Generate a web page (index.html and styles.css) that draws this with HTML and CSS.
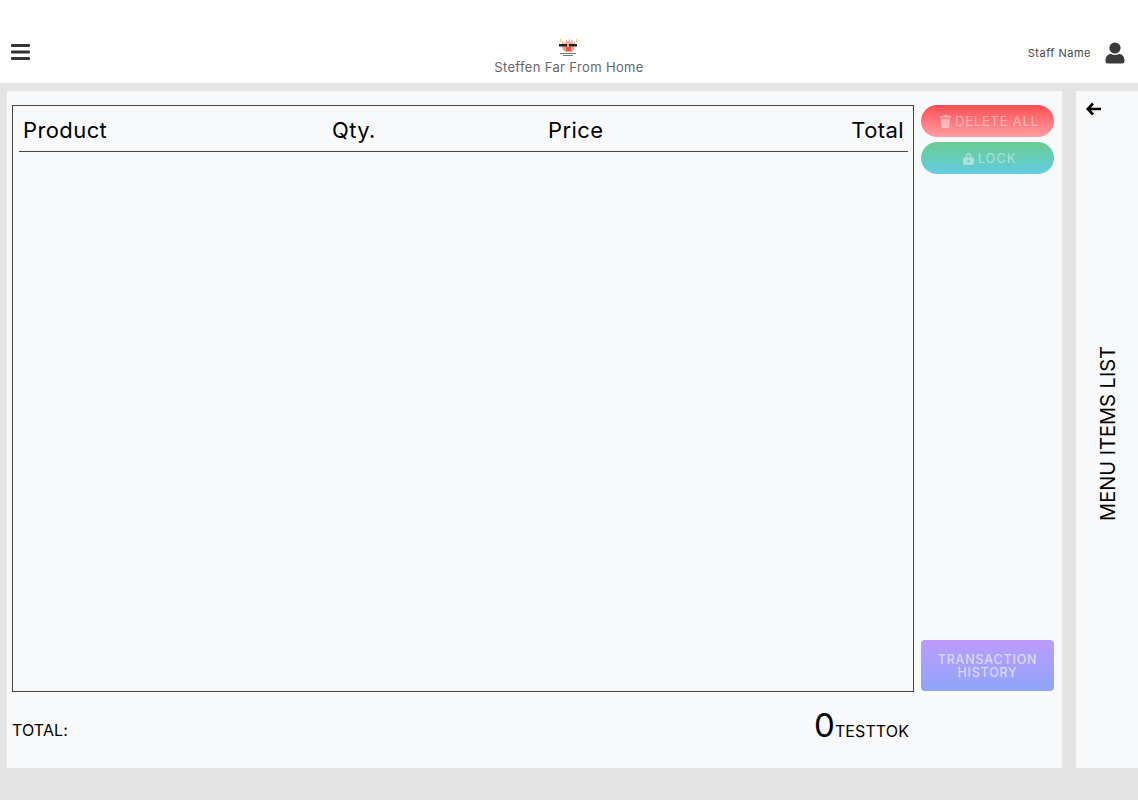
FILE: index.html
```html
<!DOCTYPE html>
<html lang="en">
<head>
  <meta charset="UTF-8" />
  <meta name="viewport" content="width=device-width, initial-scale=1.0"/>
  <title>Steffen Far From Home</title>
  <link rel="stylesheet" href="styles.css">
</head>
<body>

  <header class="topbar">
    <svg class="menu-icon" viewBox="0 0 20 18" aria-hidden="true">
      <rect x="0" y="1" width="19" height="3" rx="1"/>
      <rect x="0" y="7.5" width="19" height="3" rx="1"/>
      <rect x="0" y="14" width="19" height="3" rx="1"/>
    </svg>

    <div class="brand">
      <svg class="logo" viewBox="0 0 20 20" aria-hidden="true">
        <path fill="#f0a290" d="M3 4l3 3 1.500-5L9 6l1-5 1.500 5L13 2l1 5 2-3-.5 8-2.500 3H6l-2.500-3z"/>
        <path fill="#f3c65e" d="M1 2h1v3H1zM17 2h1v3h-1z"/>
        <path fill="#222" d="M0 7h8v2.500H0zM10 7h8v2.500h-8z"/>
        <path fill="#dd5a44" d="M7 10h5v4H7z"/>
        <path fill="#777" d="M1 16h16v1H1zM4 18h10v1H4z"/>
      </svg>
      <div class="brand-name">Steffen Far From Home</div>
    </div>

    <div class="staff">
      <span class="staff-name">Staff Name</span>
      <svg class="user-icon" viewBox="0 0 20 22" aria-hidden="true">
        <circle cx="10" cy="6" r="5.6"/>
        <path d="M0.5 19c0-4.500 2.500-7 5.500-7 1.200.6 2.600 1 4 1s2.800-.4 4-1c3 0 5.500 2.500 5.500 7 0 1.400-1 2.400-2.400 2.400H2.900C1.500 21.400.5 20.400.5 19z"/>
      </svg>
    </div>
  </header>

  <div class="content">
    <main class="order-panel">
      <div class="order-top">
        <section class="order-table">
          <div class="order-head">
            <span class="col">Product</span>
            <span class="col">Qty.</span>
            <span class="col">Price</span>
            <span class="col col-total">Total</span>
          </div>
        </section>

        <aside class="actions">
          <button class="btn btn-delete">
            <svg class="btn-icon" viewBox="0 0 12 14" aria-hidden="true">
              <path d="M4 0h4l.5 1H12v2H0V1h3.500zM1 4h10l-.7 9.200c0 .5-.4.800-.9.800H2.600c-.5 0-.9-.3-.9-.8z"/>
            </svg>
            DELETE ALL
          </button>
          <button class="btn btn-lock">
            <svg class="btn-icon" viewBox="0 0 12 14" aria-hidden="true">
              <path fill-rule="evenodd" d="M3 6V4a3 3 0 0 1 6 0v2h1.500c.8 0 1.500.7 1.500 1.500v5c0 .8-.7 1.500-1.500 1.500h-9C.7 14 0 13.300 0 12.500v-5C0 6.700.7 6 1.500 6zm1.500 0h3V4a1.500 1.500 0 0 0-3 0zM6 8.500a1.300 1.300 0 1 0 0 2.600 1.300 1.300 0 0 0 0-2.600z"/>
            </svg>
            LOCK
          </button>
          <button class="btn btn-history">TRANSACTION<br>HISTORY</button>
        </aside>
      </div>

      <div class="order-total">
        <span class="total-label">TOTAL:</span>
        <span class="total-value"><span class="total-num">0</span>TESTTOK</span>
      </div>
    </main>

    <aside class="menu-panel">
      <svg class="back-icon" viewBox="0 0 16 14" aria-hidden="true">
        <path d="M7 1.500L1.800 7 7 12.500M2 7h13" fill="none" stroke="#000" stroke-width="2.600"/>
      </svg>
      <div class="menu-title">MENU ITEMS LIST</div>
    </aside>
  </div>

</body>
</html>
```

FILE: styles.css
```css
* {
  margin: 0; padding: 0; box-sizing: border-box;
}
body {
  font-family: 'Inter', 'Liberation Sans', sans-serif;
  background: #e4e4e4;
  color: #000;
  height: 800px;
  overflow: hidden;
}
.topbar {
  height: 83px;
  background: #fff;
  position: relative;
  display: flex;
  align-items: flex-end;
  justify-content: space-between;
  padding: 0 11px 19px;
}
.menu-icon {
  width: 20px;
  height: 18px;
  fill: #333;
  margin-bottom: 3px;
}
.brand {
  position: absolute;
  left: 0;
  right: 0;
  top: 37px;
  text-align: center;
}
.logo {
  display: block;
  width: 20px;
  height: 20px;
  margin: 0 auto 2px;
}
.brand-name {
  font-size: 13px;
  line-height: 16px;
  color: #666;
  letter-spacing: 0.35px;
}
.staff {
  display: flex;
  align-items: center;
  gap: 14px;
  margin-right: 2px;
}
.staff-name {
  font-size: 11px;
  color: #444;
  letter-spacing: 0.5px;
}
.user-icon {
  width: 20px;
  height: 22px;
  fill: #3a3a3a;
}
.content {
  display: flex;
  gap: 14px;
  padding: 8px 0 0 7px;
}
.order-panel {
  width: 1055px;
  height: 677px;
  background: #f8f9fb;
  padding: 14px 8px 0 5px;
}
.order-top {
  display: flex;
  gap: 7px;
  height: 587px;
}
.order-table {
  width: 902px;
  border: 1px solid #444;
  padding: 0 5px 0 6px;
}
.order-head {
  display: grid;
  grid-template-columns: 309px 216px 1fr 1fr;
  height: 46px;
  align-items: center;
  border-bottom: 1px solid #444;
  font-size: 22px;
  letter-spacing: 0.4px;
  padding: 3px 4px 0;
}
.col-total { text-align: right; }
.actions {
  flex: 1;
  display: flex;
  flex-direction: column;
  gap: 5px;
  padding-bottom: 1px;
}
.btn {
  border: none;
  color: rgba(255,255,255,0.45);
  font-family: inherit;
  font-size: 13px;
  display: flex;
  align-items: center;
  justify-content: center;
  gap: 4px;
  height: 32px;
  padding-left: 4px;
  border-radius: 16px;
  letter-spacing: 0.8px;
}
.btn-icon {
  width: 11px;
  height: 13px;
  fill: rgba(255,255,255,0.45);
}
.btn-delete {
  background: linear-gradient(#fb4e52, #ff9ea3);
}
.btn-lock {
  background: linear-gradient(#6bcd90, #62cce4);
}
.btn-history {
  margin-top: auto;
  height: 51px;
  padding-left: 0;
  border-radius: 4px;
  font-size: 12.5px;
  line-height: 13px;
  font-weight: 500;
  letter-spacing: 0.8px;
  color: rgba(255,255,255,0.6);
  background: linear-gradient(#bd9bfd, #8ea5f8);
}
.order-total {
  display: flex;
  align-items: flex-end;
  justify-content: space-between;
  width: 897px;
  height: 49px;
}
.total-label {
  font-size: 16px;
  letter-spacing: 0.1px;
  padding-bottom: 1px;
}
.total-value {
  font-size: 16px;
  letter-spacing: 0.1px;
  margin-bottom: -2px;
}
.total-num {
  font-size: 33px;
  line-height: 36px;
}
.menu-panel {
  width: 62px;
  height: 677px;
  background: #f8f9fb;
  position: relative;
  display: flex;
  align-items: center;
  justify-content: center;
}
.back-icon {
  position: absolute;
  left: 10px;
  top: 11px;
  width: 16px;
  height: 14px;
}
.menu-title {
  writing-mode: vertical-rl;
  transform: rotate(180deg);
  font-size: 20px;
  margin: 7px 0 0 2px;
}
```
